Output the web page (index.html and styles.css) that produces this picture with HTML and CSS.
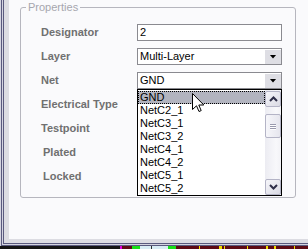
FILE: index.html
```html
<!DOCTYPE html>
<html lang="en">
<head>
<meta charset="utf-8">
<title>Properties</title>
<link rel="stylesheet" href="styles.css">
</head>
<body>
<div class="screen">
  <div class="frame">
    <div class="panel">
      <fieldset class="group">
        <legend class="group-title">Properties</legend>
        <div class="form">
          <span class="label">Designator</span>
          <div class="field edit">2</div>

          <span class="label">Layer</span>
          <div class="field combo">
            <span class="value">Multi-Layer</span>
            <span class="drop-btn"><i class="tri"></i></span>
          </div>

          <span class="label">Net</span>
          <div class="field combo open">
            <span class="value">GND</span>
            <span class="drop-btn"><i class="tri"></i></span>
            <div class="dropdown">
              <ul class="options">
                <li class="option selected">GND</li>
                <li class="option">NetC2_1</li>
                <li class="option">NetC3_1</li>
                <li class="option">NetC3_2</li>
                <li class="option">NetC4_1</li>
                <li class="option">NetC4_2</li>
                <li class="option">NetC5_1</li>
                <li class="option">NetC5_2</li>
              </ul>
              <div class="scrollbar">
                <span class="sb-btn sb-up">
                  <svg width="9" height="6" viewBox="0 0 9 6"><polyline points="1,5 4.5,1.5 8,5" fill="none" stroke="#2e2e48" stroke-width="2"/></svg>
                </span>
                <span class="sb-thumb"><i class="grip"></i><i class="grip"></i><i class="grip"></i></span>
                <span class="sb-space"></span>
                <span class="sb-btn sb-down">
                  <svg width="9" height="6" viewBox="0 0 9 6"><polyline points="1,1 4.5,4.5 8,1" fill="none" stroke="#2e2e48" stroke-width="2"/></svg>
                </span>
              </div>
            </div>
          </div>

          <span class="label">Electrical Type</span>
          <span class="field-empty"></span>

          <span class="label">Testpoint</span>
          <span class="field-empty"></span>

          <span class="label label-indent">Plated</span>
          <span class="field-empty"></span>

          <span class="label label-indent">Locked</span>
          <span class="field-empty"></span>
        </div>
      </fieldset>
    </div>
  </div>
  <div class="taskbar"></div>
  <svg class="cursor" width="13" height="20" viewBox="0 0 13 20">
    <path d="M0.5 0.5 V16.5 L4.5 12.8 L7 18.5 L9.2 17.6 L6.8 12 H11.8 Z" fill="#fff" stroke="#000" stroke-width="1" stroke-linejoin="miter"/>
  </svg>
</div>
</body>
</html>
```

FILE: styles.css
```css
html, body {
  margin: 0;
  padding: 0;
}

body {
  font-family: "Liberation Sans", Arial, sans-serif;
  font-size: 11px;
  color: #000;
  background: #fafafc;
}

.screen {
  position: relative;
  width: 308px;
  height: 249px;
  display: flex;
  flex-direction: column;
  overflow: hidden;
}

.frame {
  height: 246px;
  display: flex;
  box-shadow:
    inset 1px 0 0 #d4d4e0,
    inset 2px -1px 0 #5a5a7e,
    inset 3px -2px 0 #d4d4e0,
    inset 4px -3px 0 #5a5a7e,
    inset 9px -7px 0 #dcdce2;
}

.panel {
  margin: 0 0 7px 9px;
  flex: 1;
  background: #fafafc;
  padding-top: 1px;
}

.group {
  margin: 0 0 0 11px;
  padding: 0;
  width: 276px;
  height: 197px;
  box-sizing: border-box;
  min-inline-size: 0;
  border: 1px solid #b6b6be;
  border-radius: 3px;
}

.group-title {
  margin-left: 5px;
  padding: 0 2px;
  line-height: 13px;
  color: #a6a6ae;
  font-size: 11px;
}

.form {
  padding: 10px 0 0 20px;
  display: grid;
  grid-template-columns: 96px 145px;
  grid-auto-rows: 17px;
  row-gap: 7px;
  align-items: center;
}

.label {
  font-weight: bold;
  color: #707070;
  line-height: 13px;
  white-space: nowrap;
}

.label-indent {
  margin-left: 2px;
}

.field {
  box-sizing: border-box;
  height: 17px;
  border: 1px solid #8a8a90;
  background: #fff;
  display: flex;
  align-items: center;
  padding-left: 2px;
  line-height: 13px;
}

.combo {
  position: relative;
  padding-right: 0;
}

.combo .value {
  flex: 1;
}

.drop-btn {
  width: 16px;
  height: 14px;
  margin: 0 0 0 0;
  background: #dedee4;
  display: flex;
  align-items: center;
  justify-content: center;
}

.tri {
  display: block;
  width: 7px;
  height: 4px;
  background: #000;
  clip-path: polygon(0 0, 100% 0, 50% 100%);
}

.dropdown {
  position: absolute;
  left: -1px;
  top: 16px;
  width: 145px;
  height: 107px;
  box-sizing: border-box;
  border: 1px solid #000;
  background: #fff;
  display: flex;
  z-index: 2;
}

.options {
  list-style: none;
  margin: 0;
  padding: 1px 0 0 0;
  flex: 1;
}

.option {
  height: 13px;
  line-height: 13px;
  padding-left: 2px;
  box-sizing: border-box;
}

.selected {
  background: #b2b4bf;
  outline: 1px dotted #000;
  outline-offset: -1px;
}

.scrollbar {
  width: 16px;
  display: flex;
  flex-direction: column;
  background: linear-gradient(to right, #ececf2, #f8f8fb 70%, #f2f2f6);
  padding-top: 1px;
}

.sb-btn {
  box-sizing: border-box;
  height: 16px;
  border: 1px solid #b4b4c6;
  border-radius: 2px;
  background: linear-gradient(135deg, #f6f6fa, #dadae4);
  display: flex;
  align-items: center;
  justify-content: center;
}

.sb-thumb {
  box-sizing: border-box;
  margin-top: 7px;
  height: 24px;
  border: 1px solid #b4b4c6;
  border-radius: 2px;
  background: linear-gradient(to right, #f6f6fa, #e6e6ee);
  display: flex;
  flex-direction: column;
  align-items: center;
  justify-content: center;
  gap: 1px;
}

.grip {
  display: block;
  width: 6px;
  height: 1px;
  background: #9a9aae;
  box-shadow: 0 1px 0 #fff;
}

.sb-space {
  flex: 1;
}

.taskbar {
  height: 3px;
  background: linear-gradient(to right,
    #141414 0 120px,
    #e000e0 120px 122px,
    #5c0a14 122px 132px,
    #18e018 132px 140px,
    #d8ecf4 140px 151px,
    #303030 151px 152px,
    #d8ecf4 152px 168px,
    #18e018 168px 176px,
    #5c0a14 176px 199px,
    #f0e000 199px 200px,
    #5c0a14 200px 219px,
    #f0e000 219px 222px,
    #5c0a14 222px 224px,
    #f0e000 224px 225px,
    #5c0a14 225px 247px,
    #f0e000 247px 248px,
    #5c0a14 248px 266px,
    #f0e000 266px 268px,
    #5c0a14 268px 274px,
    #f0e000 274px 276px,
    #5c0a14 276px 294px,
    #f0e000 294px 295px,
    #5c0a14 295px);
}

.cursor {
  position: absolute;
  left: 192px;
  top: 93px;
  z-index: 5;
}
```
